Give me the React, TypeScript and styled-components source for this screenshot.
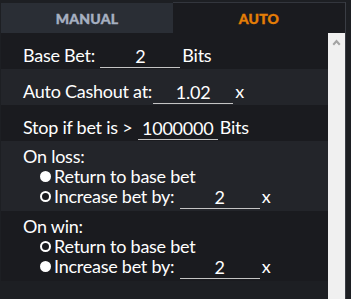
import React from "react";
import styled, { createGlobalStyle } from "styled-components";

const Global = createGlobalStyle`
  html, body { margin: 0; padding: 0; background: #1d1f23; }
  body { font-family: Lato, "Liberation Sans", sans-serif; }
`;

const Frame = styled.div`
  width: 351px;
  height: 299px;
  box-sizing: border-box;
  padding: 2px 5px 0 1px;
  background: #1d1f23;
  overflow: hidden;
`;

const Inner = styled.div`
  height: 100%;
  display: flex;
  flex-direction: column;
  border-right: 1px solid #3a3d44;
`;

const Tabs = styled.div`
  display: grid;
  grid-template-columns: 172px 1fr;
  height: 31px;
  flex: none;
`;

const Tab = styled.div<{ $active?: boolean }>`
  display: flex;
  align-items: center;
  justify-content: center;
  box-sizing: border-box;
  padding-top: 1px;
  font-family: Lato, sans-serif;
  font-weight: 900;
  font-size: 14px;
  letter-spacing: 0.2px;
  -webkit-text-stroke: 0.4px currentColor;
  text-transform: uppercase;
  color: ${(p) => (p.$active ? "#e57e06" : "#a6b0c1")};
  background: ${(p) => (p.$active ? "#1a1b1f" : "#2a2e35")};
  border-top: 1px solid ${(p) => (p.$active ? "#33363d" : "#1d1f23")};
`;

const Body = styled.div`
  flex: 1;
  display: flex;
  min-height: 0;
`;

const Content = styled.div`
  flex: 1;
  display: flex;
  flex-direction: column;
  overflow: hidden;
`;

const Row = styled.div<{ $alt?: boolean; $multi?: boolean }>`
  flex: none;
  background: ${(p) => (p.$alt ? "#23252a" : "#1a1b1f")};
  color: #ffffff;
  font-size: 18px;
  letter-spacing: -0.25px;
  line-height: 20px;
  padding: ${(p) => (p.$multi ? "5px 0 5px 22px" : "12px 0 4px 22px")};
  display: flex;
  flex-direction: column;
`;

const Line = styled.div`
  display: flex;
  align-items: flex-end;
  white-space: pre;
  height: 20px;
`;

const Option = styled(Line)`
  padding-left: 17px;
`;

const Field = styled.input`
  width: 80px;
  height: 22px;
  box-sizing: border-box;
  margin: 0 2px 0 1px;
  padding: 0 0 1px;
  border: none;
  border-bottom: 1px solid #c4c4c4;
  background: transparent;
  color: #ffffff;
  font-family: Lato, sans-serif;
  font-size: 18px;
  letter-spacing: -0.25px;
  text-align: center;
  outline: none;
  position: relative;
  top: 3px;
`;

const Radio = styled.span<{ $on?: boolean }>`
  width: 11px;
  height: 11px;
  box-sizing: border-box;
  border-radius: 50%;
  margin: 0 3px 4px 0;
  background: ${(p) => (p.$on ? "#ffffff" : "#1a1b1f")};
  border: 2px solid #ffffff;
  flex: none;
`;

const Scrollbar = styled.div`
  width: 17px;
  flex: none;
  background: #f0f0f0;
  display: flex;
  justify-content: center;
  padding-top: 6px;
  box-sizing: border-box;
`;

const Rows = () => (
  <Content>
    <Row>
      <Line>
        Base Bet: <Field defaultValue="2" />Bits
      </Line>
    </Row>
    <Row $alt>
      <Line>
        Auto Cashout at:<Field defaultValue="1.02" />x
      </Line>
    </Row>
    <Row>
      <Line>
        Stop if bet is &gt; <Field defaultValue="1000000" />Bits
      </Line>
    </Row>
    <Row $alt $multi>
      <Line>On loss:</Line>
      <Option>
        <Radio $on />Return to base bet
      </Option>
      <Option>
        <Radio />Increase bet by: <Field defaultValue="2" />x
      </Option>
    </Row>
    <Row $multi>
      <Line>On win:</Line>
      <Option>
        <Radio />Return to base bet
      </Option>
      <Option>
        <Radio $on />Increase bet by: <Field defaultValue="2" />x
      </Option>
    </Row>
  </Content>
);

export default function App() {
  return (
    <>
      <Global />
      <Frame>
        <Inner>
          <Tabs>
            <Tab>Manual</Tab>
            <Tab $active>Auto</Tab>
          </Tabs>
          <Body>
            <Rows />
            <Scrollbar>
              <svg width="9" height="7" viewBox="0 0 9 7">
                <path d="M4.5 0.5 L8.5 5 L7 6.5 L4.5 3.8 L2 6.5 L0.5 5 Z" fill="#a3a3a3" />
              </svg>
            </Scrollbar>
          </Body>
        </Inner>
      </Frame>
    </>
  );
}
